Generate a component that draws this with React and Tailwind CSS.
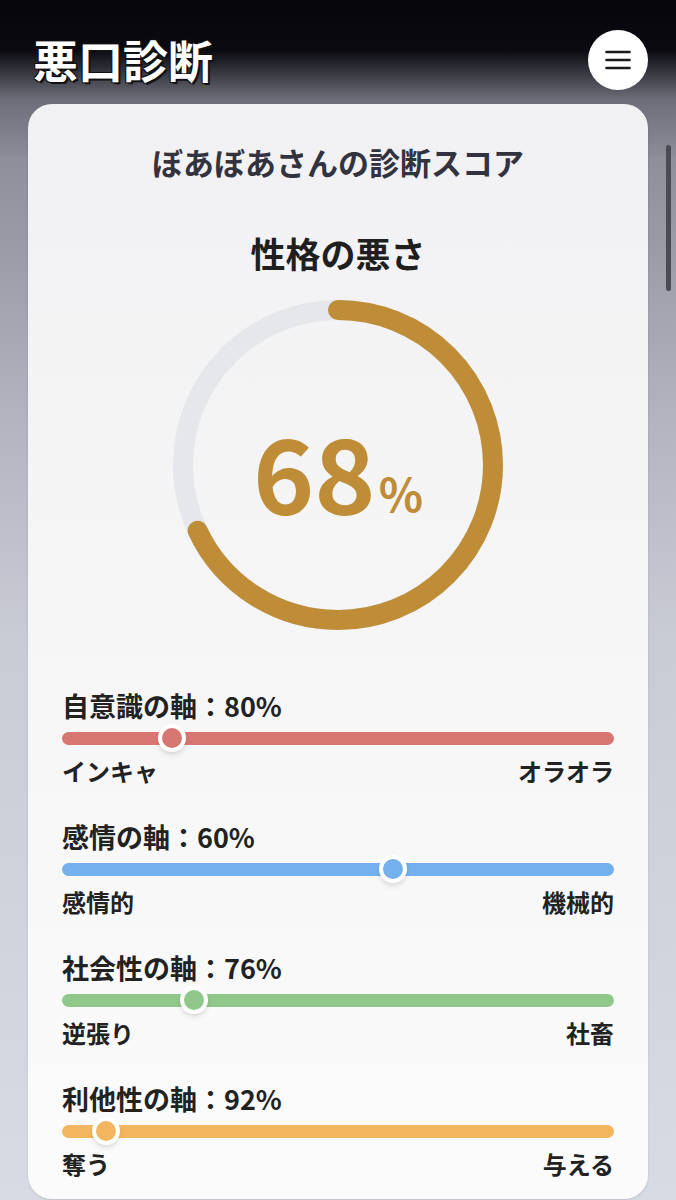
import React from 'react';

const AXES = [
  { label: '自意識の軸：80%', pos: 20, left: 'インキャ', right: 'オラオラ', color: 'bg-[#d87772]' },
  { label: '感情の軸：60%', pos: 60, left: '感情的', right: '機械的', color: 'bg-[#74b0ee]' },
  { label: '社会性の軸：76%', pos: 24, left: '逆張り', right: '社畜', color: 'bg-[#90c78a]' },
  { label: '利他性の軸：92%', pos: 8, left: '奪う', right: '与える', color: 'bg-[#f2b65e]' },
];

const R = 155;
const C = 2 * Math.PI * R;

function Gauge({ value }) {
  return (
    <div className="relative mx-auto mt-[19px] h-[340px] w-[340px]">
      <svg width="340" height="340" viewBox="0 0 340 340">
        <circle cx="170" cy="170" r={R} fill="none" stroke="#e6e7eb" strokeWidth="20" />
        <circle
          cx="170"
          cy="170"
          r={R}
          fill="none"
          stroke="#bf8d37"
          strokeWidth="20"
          strokeLinecap="round"
          strokeDasharray={`${(C * value) / 100} ${C}`}
          transform="rotate(-90 170 170)"
        />
      </svg>
      <div className="absolute inset-0 flex items-center justify-center pt-[10px]">
        <span className="text-[104px] font-bold leading-none text-[#bf8d37]">{value}</span>
        <span className="ml-[3px] mt-[44px] text-[46px] font-semibold leading-none text-[#bf8d37]">%</span>
      </div>
    </div>
  );
}

function Axis({ axis, first }) {
  return (
    <div className={first ? 'mt-[53px]' : 'mt-[33px]'}>
      <div className="text-[27px] font-bold leading-[36px] text-[#222]">{axis.label}</div>
      <div className="relative flex h-[28px] items-center">
        <div className={`h-[13px] w-full rounded-full ${axis.color}`} />
        <div
          className={`absolute top-0 h-[28px] w-[28px] -translate-x-1/2 rounded-full border-[4px] border-white shadow-md ${axis.color}`}
          style={{ left: `${axis.pos}%` }}
        />
      </div>
      <div className="mt-[4px] flex justify-between text-[24px] font-bold leading-[30px] text-[#222]">
        <span>{axis.left}</span>
        <span>{axis.right}</span>
      </div>
    </div>
  );
}

export default function App() {
  return (
    <div className="relative h-[1200px] overflow-hidden bg-[linear-gradient(180deg,#05050a_0px,#0a0a10_50px,#6e6e7a_100px,#8f8f9c_160px,#b3b4c0_420px,#c9cbd5_640px,#d8dbe4_1200px)] font-['Noto_Sans_CJK_JP','Noto_Sans',sans-serif]">
      <header className="flex items-center justify-between pb-[14px] pl-[33px] pr-[28px] pt-[30px]">
        <h1 className="text-[45px] font-bold leading-[60px] text-white [text-shadow:2px_2px_0_#111,-1px_-1px_0_#111,1px_-1px_0_#111,-1px_1px_0_#111]">
          悪口診断
        </h1>
        <button className="flex h-[60px] w-[60px] items-center justify-center rounded-full bg-white">
          <svg width="26" height="22" viewBox="0 0 26 22" fill="none" stroke="#1a1a1a" strokeWidth="2.6" strokeLinecap="round">
            <line x1="1.5" y1="3" x2="24.5" y2="3" />
            <line x1="1.5" y1="11" x2="24.5" y2="11" />
            <line x1="1.5" y1="19" x2="24.5" y2="19" />
          </svg>
        </button>
      </header>

      <main className="mx-[28px] rounded-[24px] bg-linear-to-b from-[#f1f1f3] to-[#fbfbfb] px-[34px] pb-[20px] pt-[38px] shadow-sm">
        <h2 className="text-center text-[31px] font-bold leading-[40px] text-[#33333f]">ぼあぼあさんの診断スコア</h2>
        <h3 className="mt-[48px] text-center text-[35px] font-bold leading-[46px] text-[#1f1f1f]">性格の悪さ</h3>
        <Gauge value={68} />
        {AXES.map((a, i) => (
          <Axis key={a.label} axis={a} first={i === 0} />
        ))}
      </main>

      <div className="absolute right-[5px] top-[145px] h-[146px] w-[5px] rounded-full bg-[#4b4b55]" />
    </div>
  );
}
